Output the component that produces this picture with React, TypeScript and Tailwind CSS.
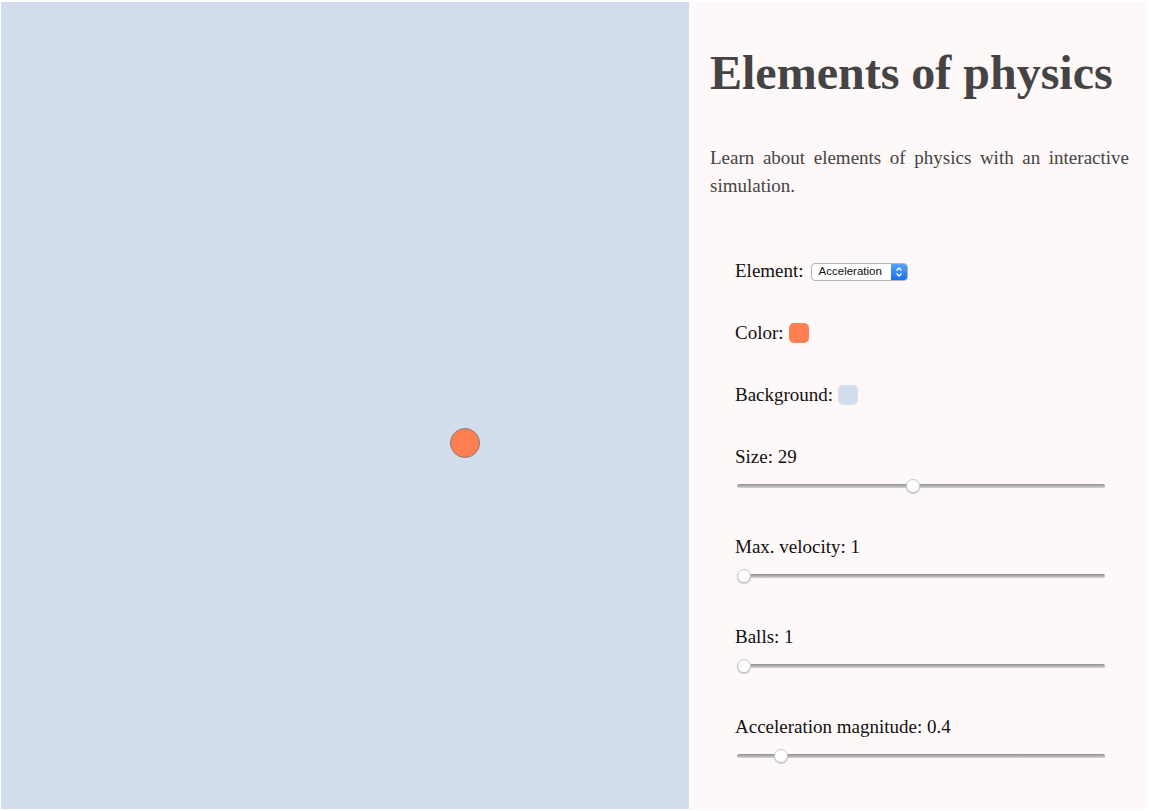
import React from 'react';

const serif = { fontFamily: '"Liberation Serif", "DejaVu Serif", serif' };

function Slider({ pct }: { pct: number }) {
  return (
    <div className="relative mt-[10px] h-[14px] w-[368px] ml-[2px]">
      <div className="absolute left-0 right-0 top-[5px] h-[4px] rounded-full bg-gradient-to-b from-[#8e8e8e] to-[#d6d6d6]" />
      <div
        className="absolute top-0 h-[14px] w-[14px] rounded-full border border-[#c8c8c8] bg-white shadow-[0_1px_1px_rgba(0,0,0,0.2)]"
        style={{ left: `calc(${pct}% - 7px)` }}
      />
    </div>
  );
}

function Label({ children }: { children: React.ReactNode }) {
  return <div className="text-[19px] leading-[24px] text-[#111]">{children}</div>;
}

export default function App() {
  const controls = [
    { label: 'Size: 29', pct: 47.8 },
    { label: 'Max. velocity: 1', pct: 1.9 },
    { label: 'Balls: 1', pct: 1.9 },
    { label: 'Acceleration magnitude: 0.4', pct: 11.9 },
  ];

  return (
    <div className="flex h-screen w-full bg-white pt-[2px] pl-[1px] pr-[2px] pb-[2px]" style={serif}>
      <div className="relative h-full w-[688px] shrink-0 bg-[#d3deed]">
        <div className="absolute left-[449px] top-[426px] h-[30px] w-[30px] rounded-full border border-[#8a7a70] bg-[#ff7f50]" />
      </div>
      <div className="h-full flex-1 bg-[#fff8f8] pl-[21px] pr-[18px] pt-[43px]">
        <h1 className="h-[56px] text-[48px] font-bold leading-[56px] text-[#444]">Elements of physics</h1>
        <p className="mt-[43px] text-justify text-[19px] leading-[28px] text-[#444]">
          Learn about elements of physics with an interactive simulation.
        </p>
        <div className="mt-[59px] pl-[25px]">
          <div className="flex items-center gap-[7px]">
            <Label>Element:</Label>
            <div
              className="mt-[2px] flex h-[18px] w-[97px] items-stretch overflow-hidden rounded-[4px] border border-[#b5b5b5] bg-white"
              style={{ fontFamily: '"Liberation Sans", Arial, sans-serif' }}
            >
              <div className="flex flex-1 items-center pl-[7px] text-[11.5px] text-[#111]">Acceleration</div>
              <div className="flex w-[16px] flex-col items-center justify-center bg-gradient-to-b from-[#5aa2f8] to-[#1a6ff0]">
                <svg width="8" height="12" viewBox="0 0 8 12" fill="none" stroke="white" strokeWidth="1.3">
                  <path d="M1.5 4.5 L4 2 L6.5 4.5" />
                  <path d="M1.5 7.5 L4 10 L6.5 7.5" />
                </svg>
              </div>
            </div>
          </div>
          <div className="mt-[38px] flex items-center gap-[5px]">
            <Label>Color:</Label>
            <div className="h-[20px] w-[20px] rounded-[5px] bg-[#ff7f50]" />
          </div>
          <div className="mt-[38px] flex items-center gap-[5px]">
            <Label>Background:</Label>
            <div className="h-[20px] w-[20px] rounded-[5px] bg-[#d3deed]" />
          </div>
          {controls.map((c, i) => (
            <div key={i} className={i === 0 ? 'mt-[38px]' : 'mt-[42px]'}>
              <Label>{c.label}</Label>
              <Slider pct={c.pct} />
            </div>
          ))}
        </div>
      </div>
    </div>
  );
}
